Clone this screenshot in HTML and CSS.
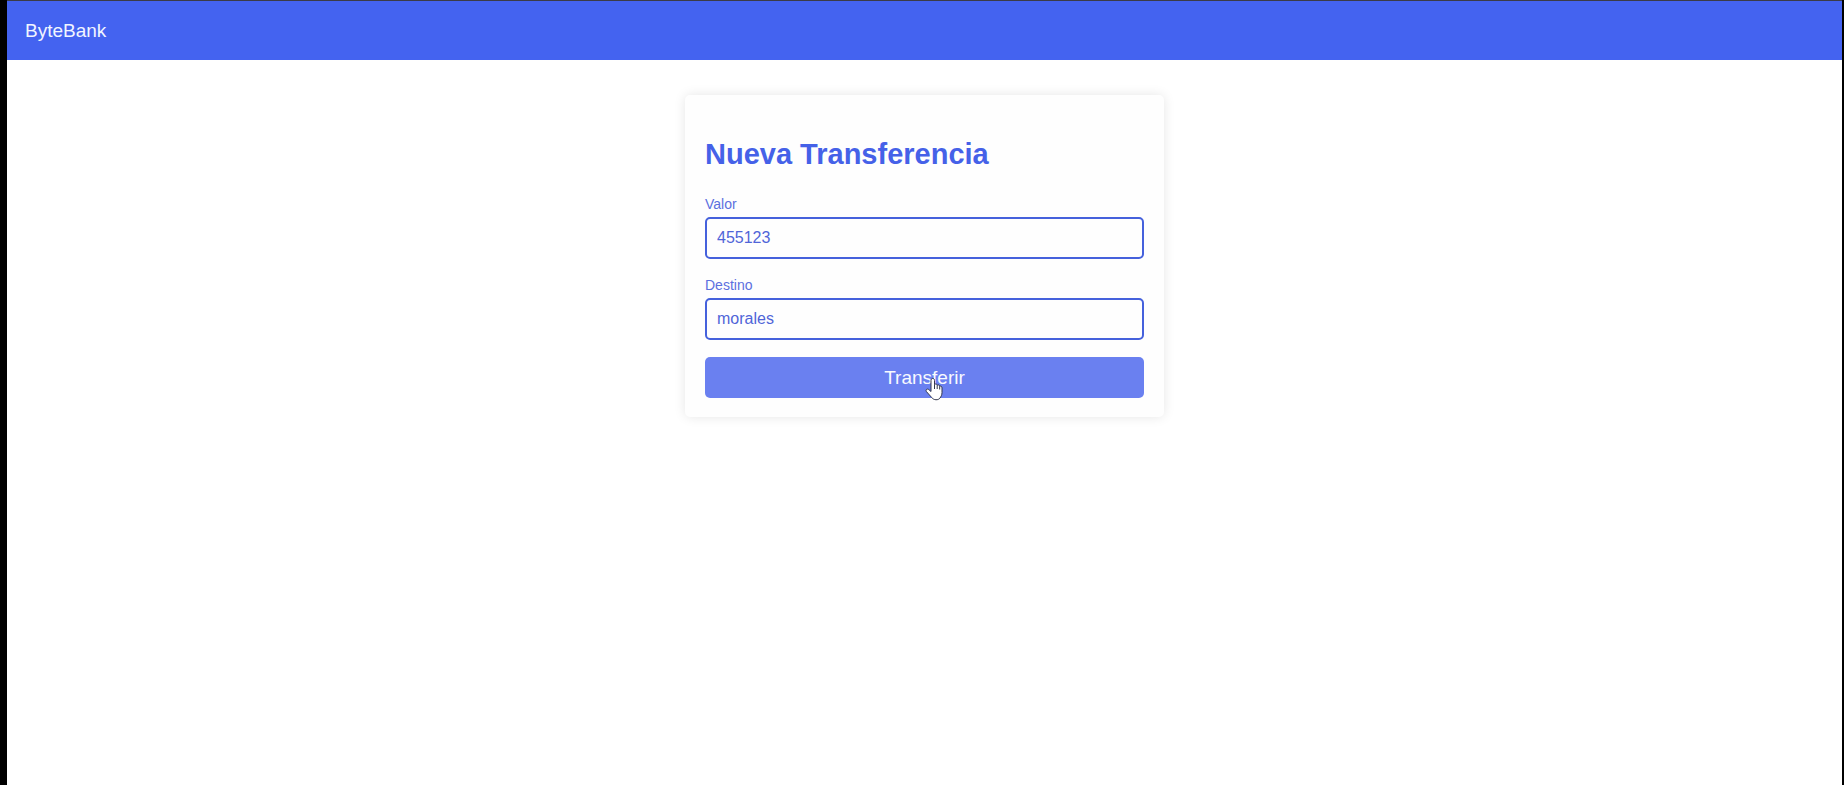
FILE: index.html
```html
<!DOCTYPE html>
<html lang="es">
<head>
  <meta charset="utf-8">
  <title>ByteBank</title>
  <link rel="stylesheet" href="styles.css">
</head>
<body>
  <header class="header">ByteBank</header>
  <main class="main">
    <form class="card">
      <h1 class="title">Nueva Transferencia</h1>
      <div class="fields">
        <div class="field">
          <label class="label" for="valor">Valor</label>
          <input class="input" id="valor" type="text" inputmode="numeric" value="455123">
        </div>
        <div class="field">
          <label class="label" for="destino">Destino</label>
          <input class="input" id="destino" type="text" value="morales">
        </div>
      </div>
      <button class="button" type="button">Transferir
        <svg class="pointer" viewBox="0 0 18 24" aria-hidden="true">
          <path d="M6 14V3.500C6 .700 9.500.700 9.500 3.500V7.500C10.500 6.500 12 7 12.200 8.200C13.300 7.500 14.500 8 14.700 9.200C16 8.700 17 9.500 17 11V15.500C17 18 16 19.500 15 21C13.500 23.500 8.500 23.300 6.700 20.500L1.500 14.700C.200 13 2 11.300 3.700 12.500L6 14.500Z"/>
          <path d="M9.500 7.500V12M12.200 8.200V12M14.700 9.200V12.500"/>
        </svg>
      </button>
    </form>
  </main>
</body>
</html>
```
FILE: styles.css
```css
* {
  box-sizing: border-box;
}

html {
  min-height: 100%;
  background: #fff;
  border-left: 7px solid #000;
  border-right: 2px solid #000;
}

body {
  margin: 0;
  color: #4361ee;
  font-family: "Liberation Sans", Arial, sans-serif;
}

.header {
  padding: 18px;
  border-top: 1px solid #3b3b47;
  background: #4463f0;
  color: #f1f5ff;
  font-size: 19px;
  line-height: 23px;
}

.main {
  display: flex;
  justify-content: center;
  padding: 35px 16px;
}

.card {
  width: 100%;
  max-width: 479px;
  padding: 20px 20px 19px;
  border-radius: 5px;
  background: #fefefe;
  box-shadow: 0 0 12px rgba(0, 0, 0, 0.1);
}

.title {
  margin: 22px 0 25px;
  color: #4561e8;
  font-size: 29px;
  line-height: 34px;
}

.fields {
  display: grid;
  gap: 18px;
  margin-bottom: 17px;
}

.field {
  display: grid;
  gap: 5px;
}

.label {
  color: #5c70df;
  font-size: 14px;
  line-height: 16px;
}

.input {
  width: 100%;
  height: 42px;
  padding: 0 10px;
  border: 2px solid #4561dc;
  border-radius: 5px;
  background: #fefefe;
  color: #5065d8;
  font: inherit;
  font-size: 16px;
}

.button {
  position: relative;
  display: block;
  width: 100%;
  height: 41px;
  padding: 0;
  border: 0;
  border-radius: 5px;
  background: #6a80f0;
  color: #f8faff;
  font: inherit;
  font-size: 19px;
  cursor: pointer;
}

.pointer {
  position: absolute;
  top: 20px;
  left: 50%;
  width: 18px;
  height: 24px;
  fill: #fff;
  stroke: #30354c;
  stroke-linejoin: round;
}
```
